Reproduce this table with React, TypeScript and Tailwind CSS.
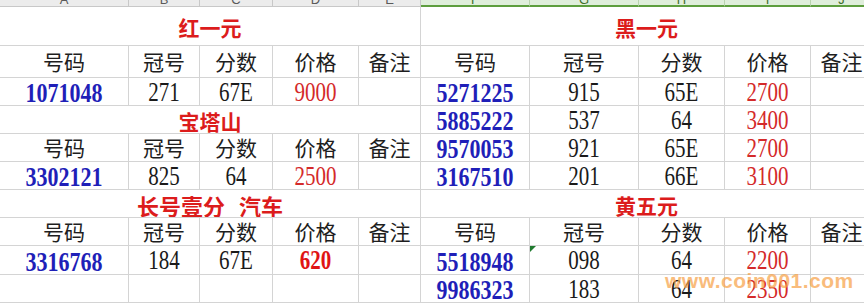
import React from 'react';

type Row = { no: string; guan: string; score: string; price: string; boldPrice?: boolean; mark?: boolean };

const letters = ['A', 'B', 'C', 'D', 'E', 'F', 'G', 'H', 'I', 'J'];
const heads = ['号码', '冠号', '分数', '价格', '备注'];

const cell = 'border-r border-b border-[#d4d4d4] flex items-center justify-center whitespace-nowrap overflow-hidden';
const num = "font-['Liberation_Serif','Times_New_Roman',serif]";
const cjk = "font-['Noto_Sans_CJK_SC',sans-serif]";

// digits in the sheet render a bit taller than wide
const Tall = ({ children }: { children?: React.ReactNode }) => (
  <span className="inline-block scale-y-[1.25] pt-[2px]">{children}</span>
);

const Title = ({ children }: { children: React.ReactNode }) => (
  <div className={`${cell} col-span-5 pt-1 text-[21px] font-bold text-[#dc1c1c] ${cjk}`}>{children}</div>
);

const Heads = () => (
  <>
    {heads.map(h => (
      <div key={h} className={`${cell} text-[21px] text-[#1e1e1e] ${cjk}`}>{h}</div>
    ))}
  </>
);

const Data = ({ row }: { row?: Row }) => (
  <>
    <div className={`${cell} text-[22px] font-bold text-[#1f1fb8] ${num}`}>
      <Tall>{row?.no}</Tall>
    </div>
    <div className={`${cell} relative text-[21px] text-[#1a1a1a] ${num}`}>
      {row?.mark && (
        <span className="absolute left-0 top-0 w-0 h-0 border-t-[6px] border-t-[#1f7a2e] border-r-[6px] border-r-transparent" />
      )}
      <Tall>{row?.guan}</Tall>
    </div>
    <div className={`${cell} text-[21px] text-[#1a1a1a] ${num}`}>
      <Tall>{row?.score}</Tall>
    </div>
    <div className={`${cell} text-[21px] text-[#d42a2a] ${num} ${row?.boldPrice ? 'font-bold text-[#e01414]' : ''}`}>
      <Tall>{row?.price}</Tall>
    </div>
    <div className={cell}></div>
  </>
);

export default function App() {
  return (
    <div className="relative w-[864px] h-[305px] overflow-hidden bg-white">
      <div className="grid grid-cols-[129px_71px_73px_86px_62px_109px_109px_86px_86px_62px] grid-rows-[7px_39px_32px_28px_28px_28px_28px_28px_28px_29px_28px]">
        {letters.map((l, i) => (
          <div
            key={l}
            className={`h-[7px] overflow-hidden flex justify-center border-r ${
              i < 5
                ? 'bg-[#ececec] border-[#c8c8c8] border-b text-[#5a5a5a]'
                : 'bg-[#dfeedb] border-r-[#b9d3ae] border-b-2 border-b-[#5d9e3e] text-[#3f6f2a]'
            } font-['Liberation_Sans',sans-serif]`}
          >
            <span className="text-[13px] leading-[13px] -mt-[7px]">{l}</span>
          </div>
        ))}

        {/* row 1 */}
        <Title>红一元</Title>
        <Title>黑一元</Title>

        {/* row 2 */}
        <Heads />
        <Heads />

        {/* row 3 */}
        <Data row={{ no: '1071048', guan: '271', score: '67E', price: '9000' }} />
        <Data row={{ no: '5271225', guan: '915', score: '65E', price: '2700' }} />

        {/* row 4 */}
        <Title>宝塔山</Title>
        <Data row={{ no: '5885222', guan: '537', score: '64', price: '3400' }} />

        {/* row 5 */}
        <Heads />
        <Data row={{ no: '9570053', guan: '921', score: '65E', price: '2700' }} />

        {/* row 6 */}
        <Data row={{ no: '3302121', guan: '825', score: '64', price: '2500' }} />
        <Data row={{ no: '3167510', guan: '201', score: '66E', price: '3100' }} />

        {/* row 7 */}
        <Title>
          <span className="text-[22px]">长号壹分</span>
          <span className="ml-[14px] text-[22px]">汽车</span>
        </Title>
        <Title>黄五元</Title>

        {/* row 8 */}
        <Heads />
        <Heads />

        {/* row 9 */}
        <Data row={{ no: '3316768', guan: '184', score: '67E', price: '620', boldPrice: true }} />
        <Data row={{ no: '5518948', guan: '098', score: '64', price: '2200', mark: true }} />

        {/* row 10 */}
        <Data />
        <Data row={{ no: '9986323', guan: '183', score: '64', price: '2350' }} />
      </div>

      <div className="absolute left-[665px] top-[265px] text-[21px] font-bold tracking-[0.5px] text-[#f7a146] opacity-70 font-['Liberation_Sans',sans-serif] pointer-events-none">
        www.coin001.com
      </div>
    </div>
  );
}
